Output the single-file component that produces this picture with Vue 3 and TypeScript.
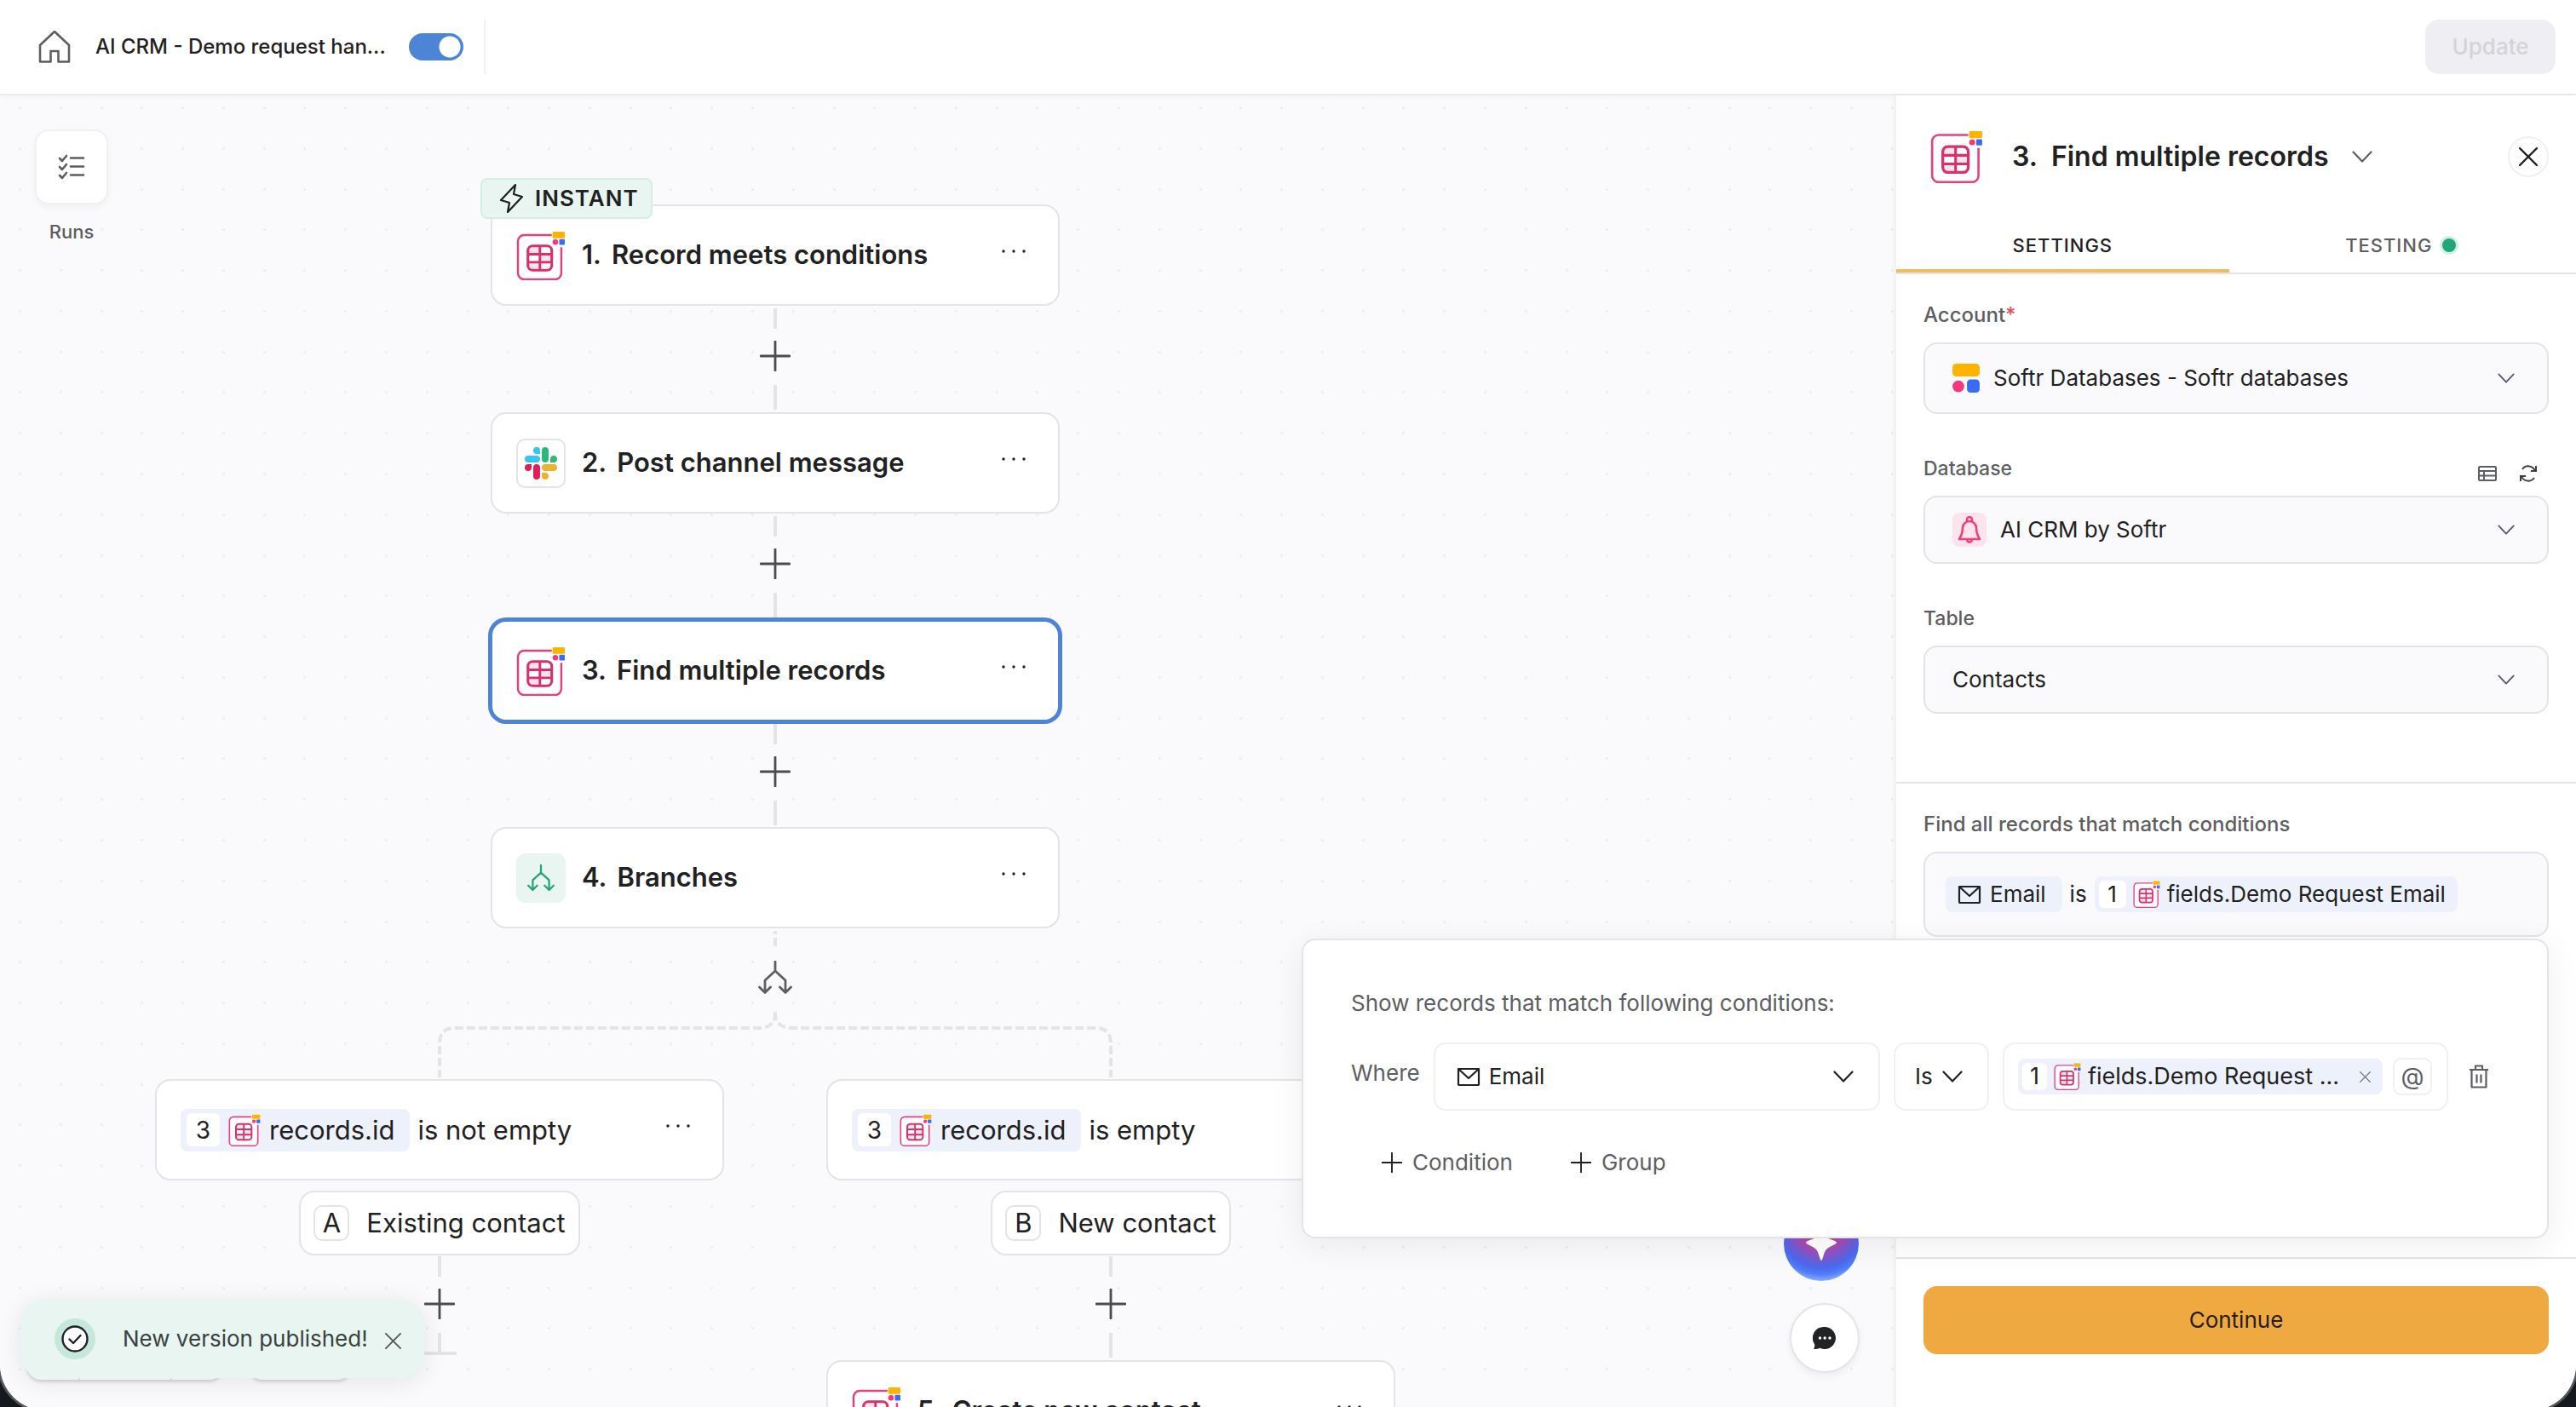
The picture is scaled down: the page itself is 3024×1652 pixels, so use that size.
<script setup lang="ts">
import { ref } from 'vue'

interface Step {
  no: number
  title: string
  icon: 'record' | 'slack' | 'branch'
  selected?: boolean
  instant?: boolean
}

interface Branch {
  key: string
  letter: string
  label: string
  test: string
}

const steps: Step[] = [
  { no: 1, title: 'Record meets conditions', icon: 'record', instant: true },
  { no: 2, title: 'Post channel message', icon: 'slack' },
  { no: 3, title: 'Find multiple records', icon: 'record', selected: true },
  { no: 4, title: 'Branches', icon: 'branch' },
]

const branches: Branch[] = [
  { key: 'existing', letter: 'A', label: 'Existing contact', test: 'is not empty' },
  { key: 'new', letter: 'B', label: 'New contact', test: 'is empty' },
]

const enabled = ref(true)

// One grid tile carries nine dots in each direction.
const dots: number[] = Array.from({ length: 9 }, (_, i) => Math.round((i * 430) / 9))
</script>

<template>
  <div class="desktop">
    <svg class="sprite" aria-hidden="true">
      <symbol id="i-record" viewBox="0 0 57 57">
        <path d="M40 5H9a7 7 0 0 0-7 7v37a7 7 0 0 0 7 7h36a7 7 0 0 0 7-7V19V5z" fill="#fff" />
        <path d="M41 5H9a7 7 0 0 0-7 7v37a7 7 0 0 0 7 7h36a7 7 0 0 0 7-7V19" fill="none" stroke="#e5417b" stroke-width="2.4" />
        <path d="M14 18h13v9H14zM27 27h14v9H27zM14 36h13v9H14z" fill="#fde3ec" />
        <rect x="13.5" y="17.5" width="27.5" height="28" rx="5.5" fill="none" stroke="#d92f6a" stroke-width="3" />
        <path d="M27.3 17v29M13 27h28M13 36.3h28" stroke="#d92f6a" stroke-width="2.8" />
        <rect x="42" y="1" width="14" height="7.5" rx="1" fill="#fcb400" />
        <circle cx="45.2" cy="13" r="3.2" fill="#f43878" />
        <rect x="49.6" y="9.7" width="6.4" height="6.6" rx="1" fill="#3a6bf5" />
      </symbol>
      <symbol id="i-softr" viewBox="0 0 30 32">
        <rect width="30" height="14" rx="4" fill="#fcb400" />
        <circle cx="6.5" cy="25" r="6.5" fill="#f43878" />
        <rect x="16" y="17.5" width="14" height="14.5" rx="4" fill="#3a6bf5" />
      </symbol>
      <symbol id="i-slack" viewBox="0 0 24 24">
        <path fill="#e01e5a" d="M5.042 15.165a2.528 2.528 0 0 1-2.52 2.523A2.528 2.528 0 0 1 0 15.165a2.527 2.527 0 0 1 2.522-2.52h2.52v2.52zM6.313 15.165a2.527 2.527 0 0 1 2.521-2.52 2.527 2.527 0 0 1 2.521 2.52v6.313A2.528 2.528 0 0 1 8.834 24a2.528 2.528 0 0 1-2.521-2.522v-6.313z" />
        <path fill="#36c5f0" d="M8.834 5.042a2.528 2.528 0 0 1-2.521-2.52A2.528 2.528 0 0 1 8.834 0a2.528 2.528 0 0 1 2.521 2.522v2.52H8.834zM8.834 6.313a2.528 2.528 0 0 1 2.521 2.521 2.528 2.528 0 0 1-2.521 2.521H2.522A2.528 2.528 0 0 1 0 8.834a2.528 2.528 0 0 1 2.522-2.521h6.312z" />
        <path fill="#2eb67d" d="M18.956 8.834a2.528 2.528 0 0 1 2.522-2.521A2.528 2.528 0 0 1 24 8.834a2.528 2.528 0 0 1-2.522 2.521h-2.522V8.834zM17.688 8.834a2.528 2.528 0 0 1-2.523 2.521 2.527 2.527 0 0 1-2.52-2.521V2.522A2.527 2.527 0 0 1 15.165 0a2.528 2.528 0 0 1 2.523 2.522v6.312z" />
        <path fill="#ecb22e" d="M15.165 18.956a2.528 2.528 0 0 1 2.523 2.522A2.528 2.528 0 0 1 15.165 24a2.527 2.527 0 0 1-2.52-2.522v-2.522h2.52zM15.165 17.688a2.527 2.527 0 0 1-2.52-2.523 2.526 2.526 0 0 1 2.52-2.52h6.313A2.527 2.527 0 0 1 24 15.165a2.528 2.528 0 0 1-2.522 2.523h-6.313z" />
      </symbol>
      <symbol id="i-fork" viewBox="0 0 40 40">
        <path d="M20 1v11M20 12L8 23v14M20 12l12 11v14M1.500 31L8 37.500l6.500-6.500M25.500 31l6.500 6.500 6.500-6.500" fill="none" stroke="currentColor" stroke-width="2.8" stroke-linecap="round" stroke-linejoin="round" />
      </symbol>
      <symbol id="i-plus" viewBox="0 0 36 36">
        <path d="M18 1v34M1 18h34" fill="none" stroke="currentColor" stroke-width="2.8" stroke-linecap="round" />
      </symbol>
      <symbol id="i-chevron" viewBox="0 0 24 14">
        <path d="M1.5 1.5L12 12.5l10.5-11" fill="none" stroke="currentColor" stroke-width="2.2" stroke-linecap="round" stroke-linejoin="round" />
      </symbol>
      <symbol id="i-mail" viewBox="0 0 28 22">
        <path d="M2 2h24v18a1 1 0 0 1-1 1H3a1 1 0 0 1-1-1zM2 2l12 11L26 2" fill="none" stroke="currentColor" stroke-width="2.2" stroke-linejoin="round" />
      </symbol>
      <symbol id="i-close" viewBox="0 0 20 20">
        <path d="M1 1l18 18M19 1L1 19" fill="none" stroke="currentColor" stroke-width="2" stroke-linecap="round" />
      </symbol>
      <symbol id="i-more" viewBox="0 0 28 4">
        <circle cx="2" cy="2" r="1.7" fill="currentColor" /><circle cx="14" cy="2" r="1.7" fill="currentColor" /><circle cx="26" cy="2" r="1.7" fill="currentColor" />
      </symbol>
    </svg>

    <div class="window">
      <header class="topbar">
        <button class="bare" aria-label="Home">
          <svg width="38" height="40" viewBox="0 0 38 40">
            <path d="M2 18L19 2l17 16v19.5h-12.500V25h-9v12.500H2z" fill="none" stroke="#5d5e61" stroke-width="2.6" stroke-linejoin="round" />
          </svg>
        </button>
        <h1 class="flow-name">AI CRM - Demo request han...</h1>
        <input v-model="enabled" class="switch" type="checkbox" aria-label="Enabled" />
        <span class="rule"></span>
        <button class="update" disabled>Update</button>
      </header>

      <div class="main">
        <main class="canvas">
          <svg class="grid" width="100%" height="100%" aria-hidden="true">
            <defs>
              <pattern id="dots" x="22" y="13" width="430" height="430" patternUnits="userSpaceOnUse">
                <template v-for="y in dots" :key="y">
                  <rect v-for="x in dots" :key="x" :x="x" :y="y" width="3" height="3" rx="1" fill="#ededf0" />
                </template>
              </pattern>
            </defs>
            <rect width="100%" height="100%" fill="url(#dots)" />
          </svg>

          <div class="runs">
            <button class="runs-button" aria-label="Runs">
              <svg width="32" height="30" viewBox="0 0 32 30" fill="none" stroke="#5d5e61" stroke-width="2.6" stroke-linecap="round" stroke-linejoin="round">
                <path d="M2 5l3 3 5-6M2 15l3 3 5-6M2 25l3 3 5-6M15 4.500h15M15 14.500h15M15 24.500h15" />
              </svg>
            </button>
            <span class="runs-label">Runs</span>
          </div>

          <div class="trunk">
            <template v-for="(step, i) in steps" :key="step.no">
              <div v-if="i > 0" class="connector">
                <span class="line"></span>
                <button class="bare plus" aria-label="Add step"><svg width="36" height="36"><use href="#i-plus" /></svg></button>
                <span class="line long"></span>
              </div>
              <article class="card" :class="{ selected: step.selected }">
                <span v-if="step.instant" class="instant">
                  <svg width="28" height="36" viewBox="0 0 28 36"><path d="M19 2L2 20l10 3-2 11 17-18-10-3z" fill="none" stroke="#1d1f20" stroke-width="2.2" stroke-linejoin="round" /></svg>
                  INSTANT
                </span>
                <svg v-if="step.icon === 'record'" class="step-icon" width="58" height="58"><use href="#i-record" /></svg>
                <span v-else-if="step.icon === 'slack'" class="step-icon tile"><svg width="38" height="38"><use href="#i-slack" /></svg></span>
                <span v-else class="step-icon tile green"><svg width="32" height="32"><use href="#i-fork" /></svg></span>
                <h2 class="card-title"><span>{{ step.no }}.</span> {{ step.title }}</h2>
                <button class="bare more" aria-label="More"><svg width="28" height="4"><use href="#i-more" /></svg></button>
              </article>
            </template>
          </div>

          <svg class="split" width="800" height="176" viewBox="0 0 800 176" fill="none" stroke="#e4e4e7" stroke-width="4" aria-hidden="true">
            <path d="M400 1v4M400 9v10" />
            <path d="M400 96v2q0 17-20 17H24q-18 0-18 18v40" stroke-dasharray="10 4" />
            <path d="M400 96v2q0 17 20 17h356q18 0 18 18v40" stroke-dasharray="10 4" />
            <use href="#i-fork" x="380" y="36" width="40" height="40" color="#5d5e61" />
          </svg>

          <section v-for="b in branches" :key="b.key" class="branch" :class="b.key">
            <article class="card">
              <span class="chip big">
                <span class="num">3</span>
                <svg width="38" height="38"><use href="#i-record" /></svg>
                records.id
              </span>
              <span class="test">{{ b.test }}</span>
              <button class="bare more" aria-label="More"><svg width="28" height="4"><use href="#i-more" /></svg></button>
            </article>
            <div class="pill"><span class="letter">{{ b.letter }}</span>{{ b.label }}</div>
            <div class="connector">
              <span class="line"></span>
              <button class="bare plus" aria-label="Add step"><svg width="36" height="36"><use href="#i-plus" /></svg></button>
              <span class="line long" :class="{ end: b.key === 'existing' }"></span>
            </div>
            <article v-if="b.key === 'new'" class="card">
              <svg class="step-icon" width="58" height="58"><use href="#i-record" /></svg>
              <h2 class="card-title"><span>5.</span> Create new contact</h2>
              <button class="bare more" aria-label="More"><svg width="28" height="4"><use href="#i-more" /></svg></button>
            </article>
          </section>

          <div class="zoom-tools">
            <div class="tool-group"><i></i><i></i><i></i></div>
            <div class="tool-single"></div>
          </div>

          <div class="toast" role="status">
            <span class="toast-icon">
              <svg width="32" height="32" viewBox="0 0 32 32" fill="none" stroke="#231f2c" stroke-width="2.4" stroke-linecap="round" stroke-linejoin="round">
                <circle cx="16" cy="16" r="14.5" fill="#fff" /><path d="M9.500 16.500l4.500 4.500 8.500-9" />
              </svg>
            </span>
            <span class="toast-text">New version published!</span>
            <button class="bare toast-close" aria-label="Dismiss"><svg width="19" height="19"><use href="#i-close" /></svg></button>
          </div>

          <div class="fabs">
            <button class="fab ai" aria-label="Assistant">
              <svg width="40" height="40" viewBox="0 0 40 40"><path d="M20 0c1 8 3 12 8 14l8 3q4 2 0 4l-6 3c-4 2-6 5-7 9l-2 6q-1 2-2 0l-2-6c-1-4-3-7-7-9l-6-3q-4-2 0-4l8-3c5-2 7-6 8-14z" fill="#fff" /></svg>
            </button>
            <button class="fab chat" aria-label="Chat">
              <svg width="28" height="28" viewBox="0 0 28 28"><path d="M14 1a13 13 0 1 1-5.500 24.800Q5 27.500 1 27q2-3 1-6A13 13 0 0 1 14 1z" fill="#222324" /><circle cx="8.500" cy="14" r="1.7" fill="#fff" /><circle cx="14.200" cy="14" r="1.7" fill="#fff" /><circle cx="20" cy="14" r="1.7" fill="#fff" /></svg>
            </button>
          </div>
        </main>

        <aside class="panel">
          <div class="panel-head">
            <svg width="62" height="62"><use href="#i-record" /></svg>
            <h2 class="panel-title"><span>3.</span> Find multiple records</h2>
            <button class="bare expand" aria-label="Expand"><svg width="24" height="14"><use href="#i-chevron" /></svg></button>
            <button class="close" aria-label="Close"><svg width="22" height="22"><use href="#i-close" /></svg></button>
          </div>
          <nav class="tabs">
            <button class="tab active">SETTINGS</button>
            <button class="tab">TESTING<span class="dot"></span></button>
          </nav>

          <div class="fields">
            <div class="field">
              <label for="account">Account<b>*</b></label>
              <div class="select tall">
                <svg class="brand" width="32" height="34"><use href="#i-softr" /></svg>
                <select id="account"><option>Softr Databases - Softr databases</option></select>
                <svg class="caret" width="20" height="12"><use href="#i-chevron" /></svg>
              </div>
            </div>
            <div class="field">
              <div class="label-row">
                <label class="small" for="database">Database</label>
                <button class="bare" aria-label="Open database">
                  <svg width="22" height="20" viewBox="0 0 22 20" fill="none" stroke="#5d5e61" stroke-width="2"><rect x="1" y="2" width="20" height="16" rx="1" /><path d="M1 7h20M1 12.500h20M7 7v11" /></svg>
                </button>
                <button class="bare" aria-label="Refresh">
                  <svg width="22" height="20" viewBox="0 0 22 20" fill="none" stroke="#3f4042" stroke-width="2"><path d="M4 5a8.500 8.500 0 0 1 15 2M20 1v6h-6M18 15a8.500 8.500 0 0 1-15-2M2 19v-6h6" /></svg>
                </button>
              </div>
              <div class="select">
                <span class="bell">
                  <svg width="28" height="32" viewBox="0 0 28 32" fill="none" stroke="#f0407c" stroke-width="2.6" stroke-linejoin="round"><path d="M6 14a8 8 0 0 1 16 0c0 6 1.500 9 4 13H2c2.500-4 4-7 4-13zM11 6V4a3 3 0 0 1 6 0v2M11 27.500a3 3 0 0 0 6 0" /></svg>
                </span>
                <select id="database"><option>AI CRM by Softr</option></select>
                <svg class="caret" width="20" height="12"><use href="#i-chevron" /></svg>
              </div>
            </div>
            <div class="field">
              <label class="small" for="table">Table</label>
              <div class="select">
                <select id="table"><option>Contacts</option></select>
                <svg class="caret" width="20" height="12"><use href="#i-chevron" /></svg>
              </div>
            </div>
          </div>

          <div class="conditions">
            <h3 class="label">Find all records that match conditions</h3>
            <div class="anchor">
              <div class="summary">
                <span class="chip mail"><svg width="28" height="22"><use href="#i-mail" /></svg>Email</span>
                <span>is</span>
                <span class="chip">
                  <span class="num">1</span>
                  <svg width="32" height="32"><use href="#i-record" /></svg>
                  fields.Demo Request Email
                </span>
              </div>

              <div class="popover" role="dialog" aria-label="Conditions">
                <p class="hint">Show records that match following conditions:</p>
                <div class="rule-row">
                  <span class="where">Where</span>
                  <div class="box column">
                    <svg width="28" height="22"><use href="#i-mail" /></svg>
                    <select aria-label="Field"><option>Email</option></select>
                    <svg width="24" height="14"><use href="#i-chevron" /></svg>
                  </div>
                  <div class="box operator">
                    <select aria-label="Operator"><option>Is</option></select>
                    <svg width="24" height="14"><use href="#i-chevron" /></svg>
                  </div>
                  <div class="box value">
                    <span class="chip">
                      <span class="num">1</span>
                      <svg width="32" height="32"><use href="#i-record" /></svg>
                      <span class="grow">fields.Demo Request ...</span>
                      <button class="bare" aria-label="Remove"><svg class="thin" width="13" height="13"><use href="#i-close" /></svg></button>
                    </span>
                    <button class="at">@</button>
                  </div>
                  <button class="bare trash" aria-label="Delete">
                    <svg width="24" height="28" viewBox="0 0 24 28" fill="none" stroke="#5d5e61" stroke-width="2.2" stroke-linejoin="round"><path d="M1 6h22M3.500 6v20.500h17V6M8 6V1.500h8V6M9.500 11.500v10M14.500 11.500v10" /></svg>
                  </button>
                </div>
                <div class="adders">
                  <button class="bare adder"><svg width="24" height="24"><use href="#i-plus" /></svg>Condition</button>
                  <button class="bare adder"><svg width="24" height="24"><use href="#i-plus" /></svg>Group</button>
                </div>
              </div>
            </div>
          </div>

          <footer class="panel-foot"><button class="continue">Continue</button></footer>
        </aside>
      </div>
    </div>
  </div>
</template>

<style>
html,
body {
  margin: 0;
  background: #15181d;
}
</style>

<style scoped>
* {
  box-sizing: border-box;
}
.desktop {
  height: 100vh;
  overflow: hidden;
  background: #15181d;
  font-family: Inter, 'Liberation Sans', sans-serif;
  font-size: 26px;
  line-height: 32px;
  color: #1f2122;
}
.sprite {
  position: absolute;
  width: 0;
  height: 0;
}
svg {
  display: block;
  flex: none;
}
h1,
h2,
h3,
p {
  margin: 0;
}
button,
select,
input {
  font: inherit;
  color: inherit;
  margin: 0;
}
.bare {
  display: flex;
  padding: 0;
  border: 0;
  background: none;
}
.window {
  display: flex;
  flex-direction: column;
  height: calc(100vh + 4px);
  overflow: hidden;
  background: #fff;
  border-radius: 0 0 54px 54px;
  box-shadow: 0 0 0 3px #55575a;
}

/* Top bar */
.topbar {
  display: flex;
  align-items: center;
  height: 112px;
  padding: 0 24px 0 45px;
  border-bottom: 2px solid #ebebed;
  position: relative;
  z-index: 1;
  box-shadow: 0 2px 6px rgba(0, 0, 0, 0.03);
}
.flow-name {
  margin-left: 29px;
  font-size: 24px;
  font-weight: 500;
}
.switch {
  appearance: none;
  width: 64px;
  height: 32px;
  margin-left: 27px;
  border-radius: 16px;
  background: radial-gradient(circle at 48px 16px, #fff 12px, #4d84d6 13px);
}
.rule {
  width: 2px;
  height: 64px;
  margin-left: 24px;
  background: #efeff1;
}
.update {
  margin-left: auto;
  width: 153px;
  height: 64px;
  border: 0;
  border-radius: 16px;
  background: #efeff3;
  color: #d3d3d8;
  font-weight: 500;
}
.main {
  display: flex;
  flex: 1;
  min-height: 0;
}

/* Canvas */
.canvas {
  position: relative;
  flex: 1;
  min-width: 0;
  overflow: hidden;
  background: #fafafc;
}
.grid {
  position: absolute;
  inset: 0;
}
.runs {
  position: absolute;
  left: 41px;
  top: 40px;
  display: flex;
  flex-direction: column;
  align-items: center;
  gap: 16px;
}
.runs-button {
  display: grid;
  place-items: center;
  width: 86px;
  height: 88px;
  border: 2px solid #f0f0f2;
  border-radius: 16px;
  background: #fff;
  box-shadow: 0 4px 8px rgba(0, 0, 0, 0.04);
}
.runs-label {
  font-size: 22px;
  font-weight: 500;
  color: #5d5e61;
}
.trunk {
  position: absolute;
  left: 576px;
  top: 128px;
  width: 668px;
}
.card {
  position: relative;
  display: flex;
  align-items: center;
  height: 119px;
  padding: 0 38px 0 28px;
  border: 2px solid #e4e4e7;
  border-radius: 18px;
  background: #fff;
}
.card.selected {
  border-color: #4d84d6;
  box-shadow: 0 0 0 3px #4d84d6;
}
.step-icon {
  margin-right: 19px;
}
.tile {
  display: grid;
  place-items: center;
  width: 58px;
  height: 58px;
  border: 2px solid #e4e4e7;
  border-radius: 10px;
}
.tile.green {
  border: 0;
  background: #e8f5f0;
  color: #26a37a;
}
.card-title {
  display: flex;
  gap: 12px;
  margin-bottom: 2px;
  font-size: 31px;
  font-weight: 600;
  line-height: 40px;
}
.more {
  margin-left: auto;
  margin-bottom: 10px;
}
.instant {
  position: absolute;
  left: -14px;
  top: -33px;
  display: flex;
  align-items: center;
  gap: 14px;
  height: 48px;
  padding: 0 14px 0 20px;
  border: 2px solid #d3eee4;
  border-radius: 8px;
  background: #e8f5f0;
  font-weight: 600;
  letter-spacing: 1px;
}
.connector {
  display: flex;
  flex-direction: column;
  align-items: center;
  height: 125px;
  padding-top: 3px;
}
.trunk .card.selected + .connector {
  height: 124px;
}
.line {
  width: 4px;
  height: 24px;
  background: #e4e4e7;
}
.plus {
  margin: 14px 0 16px;
  color: #4b4c4f;
}
.line.long {
  height: 29px;
}
.line.end {
  width: 40px;
  height: 26px;
  border-bottom: 4px solid #e4e4e7;
  background: linear-gradient(#e4e4e7, #e4e4e7) center / 4px 100% no-repeat;
}
.split {
  position: absolute;
  left: 510px;
  top: 980px;
}
.branch {
  position: absolute;
  top: 1155px;
  width: 668px;
  font-size: 31px;
}
.branch.existing {
  left: 182px;
}
.branch.new {
  left: 970px;
}
.branch .connector {
  height: 123px;
  padding-top: 1px;
}
.chip {
  display: flex;
  align-items: center;
  gap: 8px;
  height: 42px;
  padding: 0 14px 0 5px;
  border-radius: 8px;
  background: #edf1fb;
}
.num {
  display: grid;
  place-items: center;
  width: 32px;
  height: 32px;
  border-radius: 6px;
  background: #fff;
}
.chip.big {
  gap: 10px;
  height: 50px;
  padding: 0 18px 0 7px;
}
.chip.big .num {
  width: 39px;
  height: 39px;
  font-size: 28px;
}
.test {
  margin-left: 9px;
}
.pill {
  display: flex;
  align-items: center;
  gap: 20px;
  width: fit-content;
  height: 76px;
  margin: 12px auto 0;
  padding: 0 15px;
  border: 2px solid #e4e4e7;
  border-radius: 18px;
  background: #fff;
}
.letter {
  display: grid;
  place-items: center;
  width: 42px;
  height: 42px;
  border: 2px solid #e4e4e7;
  border-radius: 10px;
}
.zoom-tools {
  position: absolute;
  left: 32px;
  bottom: 36px;
  display: flex;
  gap: 30px;
}
.tool-group,
.tool-single {
  display: flex;
  height: 64px;
  border-radius: 16px;
  background: #fff;
  box-shadow: 0 2px 4px rgba(0, 0, 0, 0.18);
}
.tool-group {
  width: 230px;
}
.tool-group i {
  width: 62px;
  border-right: 2px solid #e4e4e7;
}
.tool-group i + i {
  width: 108px;
}
.tool-group i:last-child {
  border: 0;
  width: auto;
}
.tool-single {
  width: 120px;
}
.toast {
  position: absolute;
  left: 24px;
  bottom: 38px;
  display: flex;
  align-items: center;
  height: 92px;
  padding: 0 27px 0 40px;
  border-radius: 28px;
  background: #e8f5f0;
  box-shadow: 0 4px 28px rgba(40, 20, 40, 0.1);
}
.toast-icon {
  display: grid;
  place-items: center;
  width: 48px;
  height: 48px;
  border-radius: 24px;
  background: #c6e8db;
}
.toast-text {
  margin-left: 32px;
  color: #38423f;
}
.toast-close {
  margin: 4px 0 0 20px;
  color: #55595a;
}
.fabs {
  position: absolute;
  right: 43px;
  bottom: 44px;
  display: flex;
  flex-direction: column;
  align-items: flex-end;
  gap: 26px;
}
.fab {
  display: grid;
  place-items: center;
  padding: 0;
  border-radius: 50%;
}
.fab.ai {
  width: 88px;
  height: 88px;
  margin-right: 1px;
  border: 0;
  background: radial-gradient(circle at 50% 25%, #d8408a 0, #a64bb4 30px, #4b68ee 50px, #4f7cf8 58px, #9ab8fb 68px);
}
.fab.chat {
  width: 82px;
  height: 82px;
  border: 2px solid #e4e4e9;
  background: #fff;
  box-shadow: 0 4px 10px rgba(0, 0, 0, 0.06);
}

/* Side panel */
.panel {
  position: relative;
  z-index: 2;
  display: flex;
  flex-direction: column;
  flex: none;
  width: 798px;
  background: #fff;
  box-shadow: -2px 0 6px rgba(0, 0, 0, 0.05);
}
.panel-head {
  display: flex;
  align-items: center;
  height: 144px;
  padding: 0 32px 0 40px;
}
.panel-title {
  display: flex;
  gap: 16px;
  margin: 0 27px 0 34px;
  font-size: 32px;
  font-weight: 600;
  line-height: 40px;
}
.expand {
  color: #5d5e61;
}
.close {
  display: grid;
  place-items: center;
  width: 48px;
  height: 48px;
  margin-left: auto;
  padding: 0;
  border: 2px solid #f0f0f2;
  border-radius: 24px;
  background: #fff;
}
.tabs {
  display: flex;
  height: 66px;
  border-bottom: 2px solid #e4e4e7;
}
.tab {
  display: flex;
  flex: 1 1 auto;
  align-items: center;
  justify-content: center;
  gap: 12px;
  padding: 4px 0 0;
  border: 0;
  border-bottom: 4px solid transparent;
  background: none;
  color: #5d5e61;
  font-size: 22px;
  font-weight: 500;
  letter-spacing: 1px;
}
.tab.active {
  border-bottom-color: #efbb67;
  color: #1f2122;
}
.dot {
  width: 16px;
  height: 16px;
  margin-right: 4px;
  border-radius: 8px;
  background: #22a579;
  box-shadow: 0 0 0 3px #d3f0e6;
}
.fields {
  padding: 32px 32px 80px;
  border-bottom: 2px solid #e4e4e7;
}
.field + .field {
  margin-top: 48px;
}
label,
.label {
  display: block;
  color: #5d5e61;
  font-size: 24px;
  font-weight: 500;
  line-height: 32px;
}
.small {
  font-size: 23px;
}
label b {
  color: #dc5555;
  font-weight: 500;
}
.label-row {
  display: flex;
  align-items: flex-end;
  gap: 26px;
  padding-right: 13px;
}
.label-row label {
  flex: 1;
}
.select,
.box {
  display: flex;
  align-items: center;
  height: 80px;
  border: 2px solid #e4e4e7;
}
.select {
  margin-top: 16px;
  padding: 0 38px 0 32px;
  border-radius: 16px;
  background: #fafafc;
}
.select.tall {
  height: 84px;
}
select {
  appearance: none;
  flex: 1;
  min-width: 0;
  padding: 0;
  border: 0;
  background: none;
}
.brand {
  margin-right: 16px;
}
.caret {
  color: #55576b;
}
.bell {
  display: grid;
  place-items: center;
  width: 40px;
  height: 40px;
  margin-right: 16px;
  border-radius: 8px;
  background: #fde4ec;
}
.conditions {
  padding: 32px 32px 0;
}
.anchor {
  position: relative;
  margin-top: 16px;
}
.summary {
  display: flex;
  align-items: center;
  gap: 9px;
  height: 100px;
  padding: 0 24px;
  border: 2px solid #e4e4e7;
  border-radius: 16px;
  background: #fafafc;
}
.chip.mail {
  gap: 10px;
  padding: 0 19px 0 14px;
}
.popover {
  position: absolute;
  top: 102px;
  right: 0;
  width: 1464px;
  height: 352px;
  padding: 58px 56px 0;
  border: 2px solid #e4e4e7;
  border-radius: 16px;
  background: #fff;
  box-shadow: 0 8px 40px rgba(0, 0, 0, 0.07);
}
.hint,
.where,
.adder {
  color: #5d5e61;
}
.rule-row {
  display: flex;
  align-items: center;
  margin-top: 30px;
}
.where {
  margin: 0 16px 8px 0;
}
.box {
  margin-right: 16px;
  border-color: #f0f0f2;
  border-radius: 14px;
}
.column {
  flex: 1;
  gap: 10px;
  padding: 0 29px 0 25px;
}
.operator {
  width: 112px;
  padding: 0 29px 0 23px;
}
.value {
  width: 523px;
  gap: 12px;
  margin-right: 24px;
  padding: 0 17px 0 16px;
}
.value .chip {
  flex: 1;
  font-size: 27px;
}
.value .num {
  width: 29px;
}
.grow {
  flex: 1;
}
.thin {
  color: #6d6e72;
}
.at {
  width: 46px;
  height: 44px;
  padding: 0;
  border: 2px solid #f0f0f2;
  border-radius: 10px;
  background: #fff;
  color: #5d5e61;
  font-size: 28px;
}
.trash {
  margin-right: 12px;
}
.adders {
  display: flex;
  gap: 68px;
  margin: 45px 0 0 36px;
}
.adder {
  align-items: center;
  gap: 12px;
}
.adder svg {
  color: #1f2122;
}
.panel-foot {
  margin-top: auto;
  padding: 32px 32px 66px;
  border-top: 2px solid #e4e4e7;
}
.continue {
  display: block;
  width: 100%;
  height: 80px;
  border: 0;
  border-radius: 16px;
  background: #eeaa41;
  color: #2a1b1e;
}
</style>
